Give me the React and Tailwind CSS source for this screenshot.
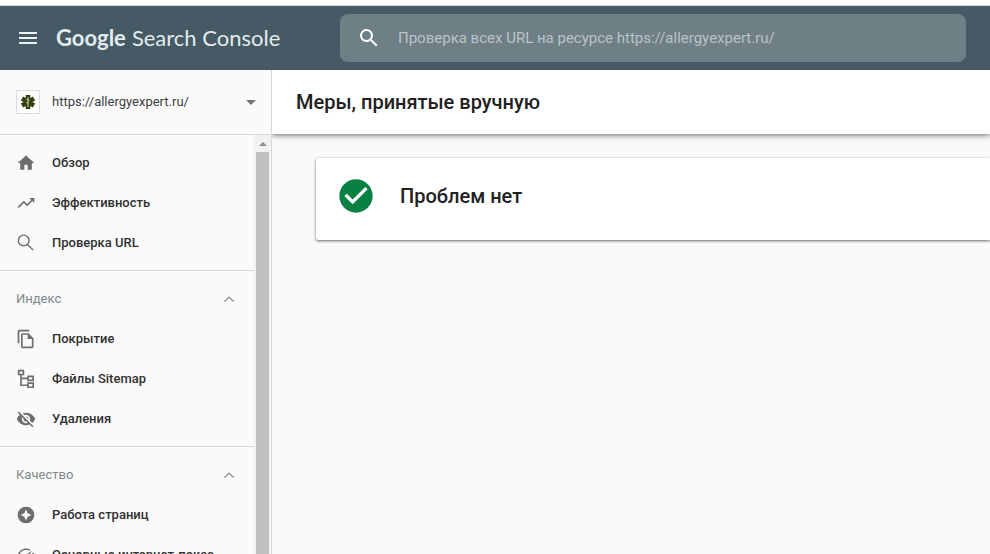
import React from "react";

function Icon({ children, className = "size-5" }) {
  return (
    <svg viewBox="0 0 24 24" fill="currentColor" aria-hidden="true" className={`shrink-0 ${className}`}>
      {children}
    </svg>
  );
}

const searchPath =
  "M15.5 14h-.79l-.28-.27A6.47 6.47 0 0 0 16 9.5 6.5 6.5 0 1 0 9.5 16c1.61 0 3.09-.59 4.23-1.57l.27.28v.79l5 4.99L20.49 19l-4.99-5zm-6 0C7.01 14 5 11.99 5 9.5S7.01 5 9.5 5 14 7.01 14 9.5 11.99 14 9.5 14z";

const icons = {
  home: <path d="M10 20v-6h4v6h5v-8h3L12 3 2 12h3v8z" />,
  trend: <path d="M16 6l2.29 2.29-4.88 4.88-4-4L2 16.59 3.41 18l6-6 4 4 6.3-6.29L22 12V6z" />,
  search: (
    <path
      d="M14 14 20.500 20.500M15.600 8.900a6.400 6.400 0 1 1-12.800 0 6.400 6.400 0 0 1 12.800 0z"
      fill="none"
      stroke="currentColor"
      strokeWidth="1.700"
    />
  ),
  pages: (
    <path d="M16 1H4C2.9 1 2 1.900 2 3v14h2V3h12V1zm-1 4H8c-1.100 0-1.990.900-1.990 2L6 21c0 1.100.890 2 1.990 2H19c1.100 0 2-.900 2-2V11l-6-6zM8 21V7h6v5h5v9H8z" />
  ),
  tree: (
    <path
      d="M3.200 1.900h5.700v4.700H3.200zM14.400 8.800h6.200v4.900h-6.200zM14.400 17h6.200v4.900h-6.200zM6 6.600v12.900h8.400M6 11.200h8.400"
      fill="none"
      stroke="currentColor"
      strokeWidth="2"
    />
  ),
  hidden: (
    <path d="M12 7c2.760 0 5 2.240 5 5 0 .650-.130 1.260-.360 1.830l2.920 2.920c1.510-1.260 2.700-2.890 3.430-4.750-1.730-4.390-6-7.500-11-7.500-1.400 0-2.740.250-3.980.700l2.160 2.160C10.740 7.130 11.350 7 12 7zM2 4.270l2.280 2.280.460.460A11.800 11.800 0 0 0 1 12c1.730 4.390 6 7.500 11 7.500 1.550 0 3.030-.300 4.380-.840l.420.420L19.730 22 21 20.730 3.270 3 2 4.270zM7.530 9.800l1.550 1.550c-.050.210-.080.430-.080.650 0 1.660 1.340 3 3 3 .220 0 .440-.030.650-.080l1.550 1.550c-.670.330-1.410.530-2.200.530-2.760 0-5-2.240-5-5 0-.790.200-1.530.530-2.200zm4.310-.780l3.150 3.150.020-.160c0-1.660-1.340-3-3-3l-.170.010z" />
  ),
  experience: (
    <path
      fillRule="evenodd"
      d="M12 2a10 10 0 1 0 0 20 10 10 0 0 0 0-20zm0 3.500 2 4.500 4.500 2-4.500 2-2 4.500-2-4.500L5.500 12l4.500-2z"
    />
  ),
  speed: (
    <path d="M20.380 8.570l-1.230 1.850a8 8 0 0 1-.220 7.580H5.070A8 8 0 0 1 15.580 6.850l1.850-1.230A10 10 0 0 0 3.350 19a2 2 0 0 0 1.720 1h13.850a2 2 0 0 0 1.740-1 10 10 0 0 0-.270-10.440zm-9.790 6.840a2 2 0 0 0 2.830 0l5.660-8.490-8.490 5.660a2 2 0 0 0 0 2.830z" />
  ),
};

const sections = [
  {
    items: [
      { icon: "home", label: "Обзор" },
      { icon: "trend", label: "Эффективность" },
      { icon: "search", label: "Проверка URL" },
    ],
  },
  {
    title: "Индекс",
    items: [
      { icon: "pages", label: "Покрытие" },
      { icon: "tree", label: "Файлы Sitemap" },
      { icon: "hidden", label: "Удаления" },
    ],
  },
  {
    title: "Качество",
    items: [
      { icon: "experience", label: "Работа страниц" },
      { icon: "speed", label: "Основные интернет-показ…" },
    ],
  },
];

function Header() {
  return (
    <header className="flex h-16 shrink-0 items-center bg-[#455a64] pr-6">
      <div className="flex w-[340px] shrink-0 items-center gap-4 pl-4">
        <button type="button" aria-label="Меню" className="text-[#edf3f5]">
          <Icon className="size-6">
            <path d="M3 18h18v-2H3v2zm0-5h18v-2H3v2zm0-7v2h18V6H3z" />
          </Icon>
        </button>
        <a href="#home" className="flex gap-1.5 whitespace-nowrap font-['Lato',sans-serif] text-[22px] leading-8 text-[#e3eaed]">
          <span className="font-bold">Google</span>
          <span>Search Console</span>
        </a>
      </div>
      <label className="flex h-12 min-w-0 flex-1 items-center gap-[17px] rounded-lg bg-[#6f7f86] px-[17px]">
        <Icon className="size-6 text-white">
          <path d={searchPath} />
        </Icon>
        <input
          type="text"
          aria-label="Проверка URL"
          placeholder="Проверка всех URL на ресурсе https://allergyexpert.ru/"
          className="min-w-0 flex-1 bg-transparent text-[15px] text-white outline-none placeholder:text-[#b9c3c7]"
        />
      </label>
    </header>
  );
}

function PropertyPicker() {
  return (
    <button type="button" className="flex h-16 w-full shrink-0 items-center gap-3 pr-[15px] pl-4 text-left text-[13px] text-[#3c4043]">
      <span className="flex size-6 items-center justify-center border border-[#dadce0] bg-white">
        <svg viewBox="0 0 16 16" className="size-4" aria-hidden="true">
          <g stroke="#34420f" strokeWidth="4.600">
            <path d="M8 1v14M2 4.500l12 7M2 11.500l12-7" />
          </g>
          <path d="M8 3v10M6.500 5.500c3-1 3 1.500 1.500 2s-1.500 2 .500 2.500" fill="none" stroke="#c3c99a" />
        </svg>
      </span>
      <span className="flex-1">https://allergyexpert.ru/</span>
      <svg viewBox="0 0 10 5" className="h-[5px] w-2.5" fill="#757575" aria-hidden="true">
        <path d="M0 0h10L5 5z" />
      </svg>
    </button>
  );
}

function NavSection({ title, items }) {
  return (
    <section className="border-t border-[#dadada] pt-2 pb-[7px]">
      {title && (
        <button type="button" className="flex h-10 w-full items-center justify-between pr-5 pl-4 text-[#80868b]">
          <span>{title}</span>
          <svg viewBox="0 0 10 6" className="h-1.5 w-2.5" fill="none" stroke="#80868b" strokeWidth="1.200" aria-hidden="true">
            <path d="M.5 5.500 5 1l4.500 4.500" />
          </svg>
        </button>
      )}
      {items.map(({ icon, label }) => (
        <a key={label} href="#report" className="flex h-10 items-center gap-4 pl-4 font-medium text-[#303030]">
          <Icon className="size-5 text-[#6e6e6e]">{icons[icon]}</Icon>
          <span className="truncate">{label}</span>
        </a>
      ))}
    </section>
  );
}

function Sidebar() {
  return (
    <aside className="flex w-[272px] shrink-0 flex-col border-r border-[#d9d9d9] bg-[#fafafa] text-[13px]">
      <PropertyPicker />
      <div className="flex min-h-0 flex-1">
        <nav className="min-w-0 flex-1 overflow-hidden">
          {sections.map((section) => (
            <NavSection key={section.title ?? "main"} {...section} />
          ))}
        </nav>
        <div className="flex w-[17px] flex-col border-t border-[#dadada] bg-[#f1f1f1]">
          <div className="flex h-[17px] items-center justify-center">
            <svg viewBox="0 0 8 4" className="h-1 w-2" fill="#8f8f8f" aria-hidden="true">
              <path d="M0 4h8L4 0z" />
            </svg>
          </div>
          <div className="mx-0.5 flex-1 bg-[#c1c1c1]" />
        </div>
      </div>
    </aside>
  );
}

export default function App() {
  return (
    <div className="flex h-screen flex-col overflow-hidden bg-[#fafafa] font-['Roboto',sans-serif]">
      <div className="h-1.5 shrink-0 border-b border-[#cfdada] bg-white" />
      <Header />
      <div className="flex min-h-0 flex-1">
        <Sidebar />
        <main className="min-w-0 flex-1 overflow-hidden text-[#212121]">
          <div className="flex h-16 items-center bg-white px-6 shadow-[0_1px_6px_rgba(0,0,0,0.6)]">
            <h1 className="text-xl font-medium">Меры, принятые вручную</h1>
          </div>
          <section className="mt-6 ml-11 flex h-[82px] items-start gap-6 rounded-l-xs bg-white px-5 pt-[18px] shadow-[0_1px_3px_rgba(0,0,0,0.6)]">
            <Icon className="size-10 text-[#0b8043]">
              <path d="M12 2C6.480 2 2 6.480 2 12s4.480 10 10 10 10-4.480 10-10S17.520 2 12 2zm-2 15l-5-5 1.410-1.410L10 14.170l7.590-7.590L19 8l-9 9z" />
            </Icon>
            <h2 className="text-xl leading-10 font-medium">Проблем нет</h2>
          </section>
        </main>
      </div>
    </div>
  );
}
